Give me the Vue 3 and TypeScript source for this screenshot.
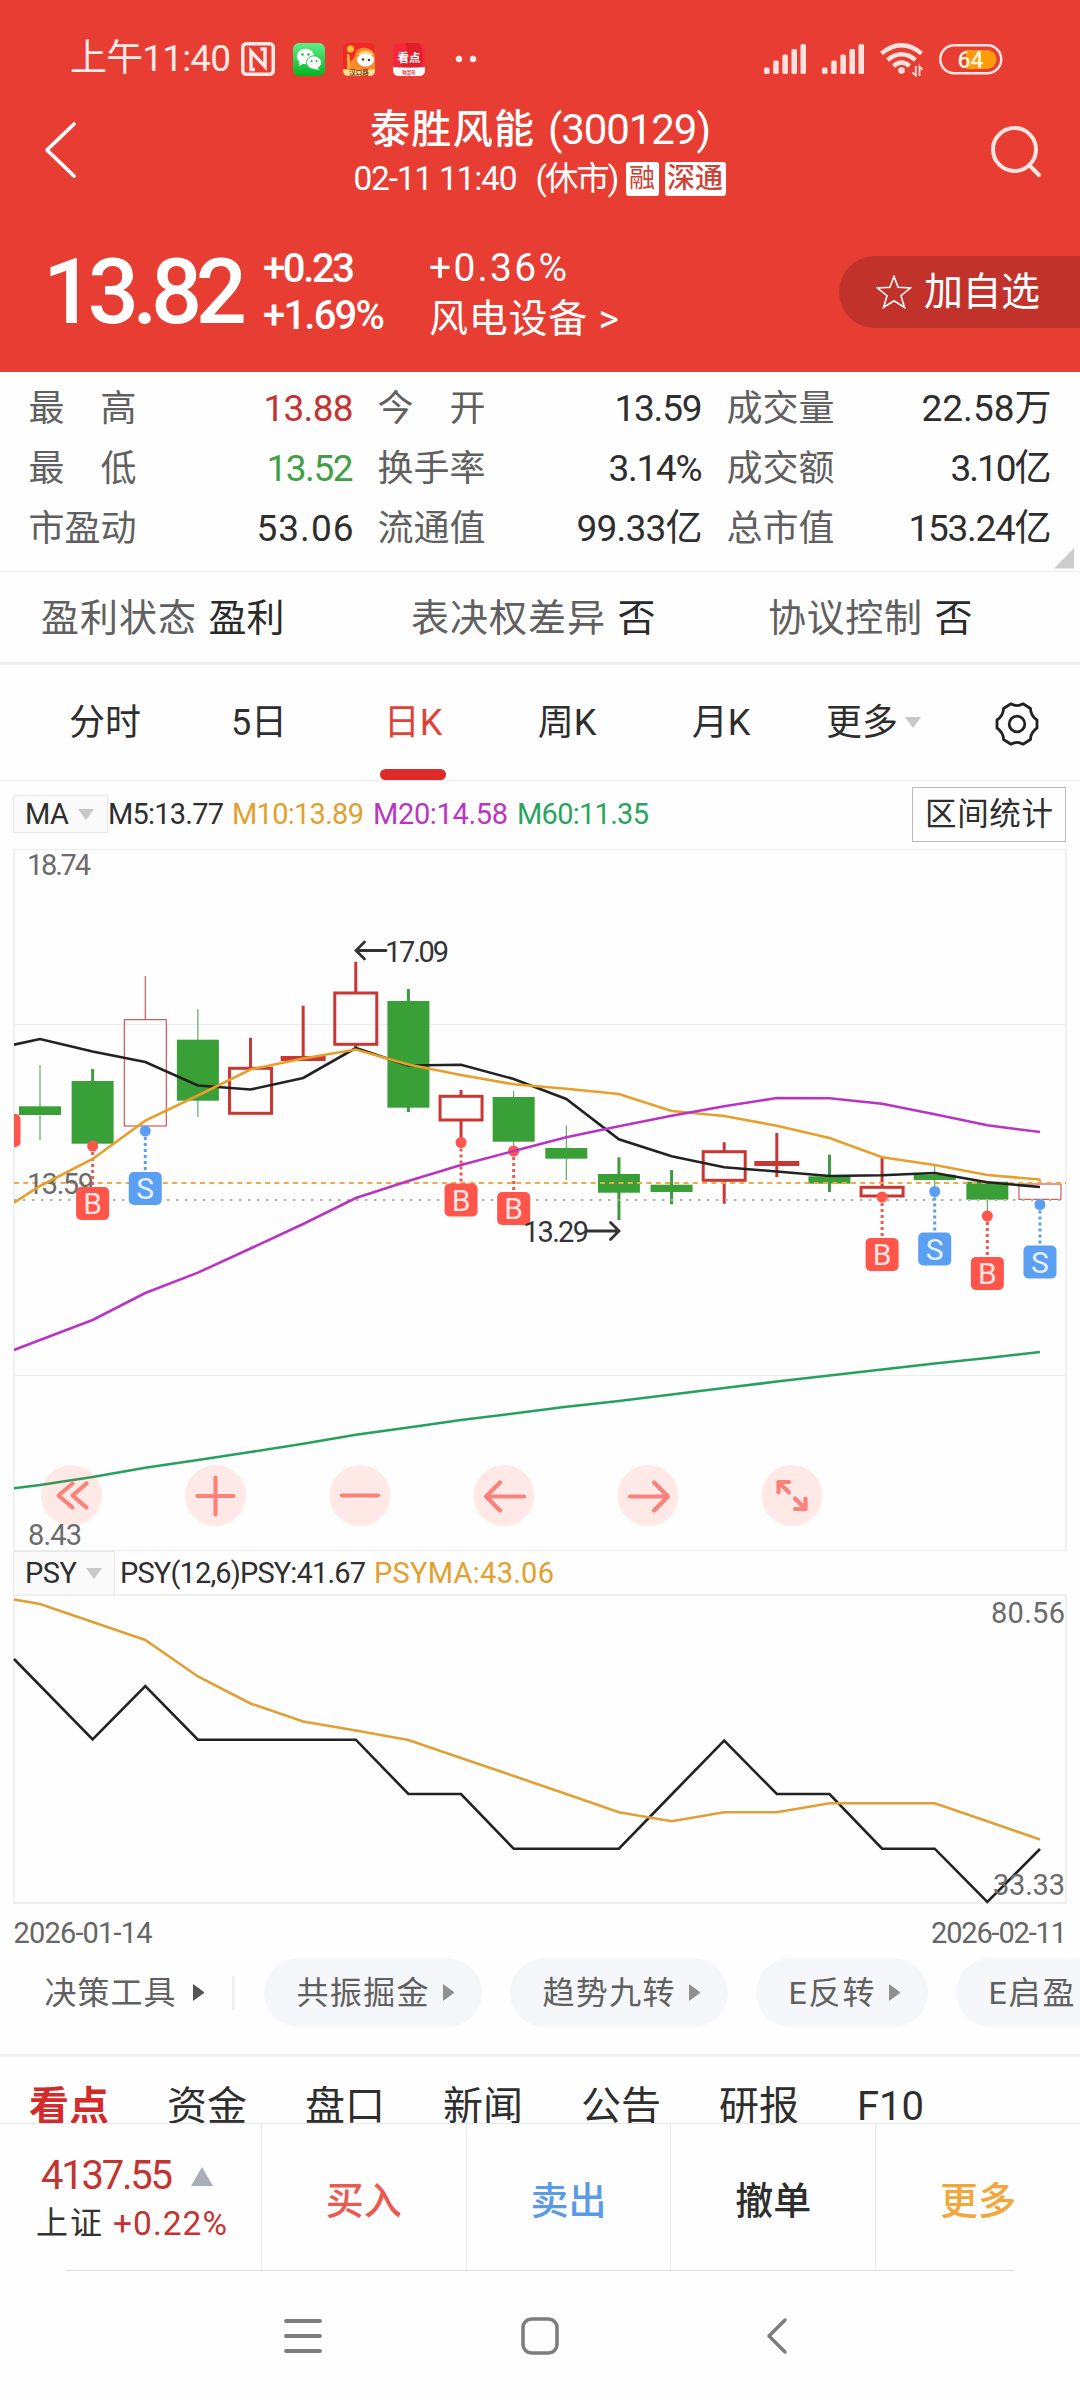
<script setup lang="ts">
import type { Directive } from 'vue'

// Spreads the letters of a label so that it takes exactly the given width.
const vFit: Directive<HTMLElement, number> = {
  mounted(el, { value }) {
    const natural = el.getBoundingClientRect().width
    const count = (el.textContent ?? '').length
    if (count > 1) el.style.letterSpacing = `${(value - natural) / (count - 1)}px`
    el.style.width = `${value}px`
  },
}

interface Stat { label: string; value: string; w: number; tone?: string }
const stats: Stat[] = [
  { label: '最　高', value: '13.88', w: 90, tone: 'up' },
  { label: '今　开', value: '13.59', w: 88 },
  { label: '成交量', value: '22.58万', w: 130 },
  { label: '最　低', value: '13.52', w: 87, tone: 'down' },
  { label: '换手率', value: '3.14%', w: 94 },
  { label: '成交额', value: '3.10亿', w: 101 },
  { label: '市盈动', value: '53.06', w: 97 },
  { label: '流通值', value: '99.33亿', w: 126 },
  { label: '总市值', value: '153.24亿', w: 143 },
]

// Candles: body top/bottom, wick top/bottom, stroke width; y is in chart space
interface Candle { up: boolean; a: number; b: number; h: number; l: number; s: number }
const k = (up: number, a: number, b: number, h: number, l: number, s = 3): Candle =>
  ({ up: !!up, a, b, h, l, s })
const candles: Candle[] = [
  k(0, 1106.3, 1115, 1065, 1140, 1),
  k(0, 1081, 1143.7, 1069, 1143),
  k(1, 1019.7, 1126, 976, 1126, 1),
  k(0, 1039.7, 1100.7, 1009.3, 1117, 1),
  k(1, 1068.3, 1113.3, 1037.7, 1113),
  k(1, 1057.5, 1059.5, 1005.7, 1059),
  k(1, 993, 1044.3, 961.7, 1047.7),
  k(0, 1001, 1107.7, 989, 1112),
  k(1, 1096.3, 1120, 1090, 1140),
  k(0, 1097, 1141.7, 1091, 1148, 1),
  k(0, 1148, 1158.7, 1125.3, 1180, 1),
  k(0, 1174, 1192.7, 1157.3, 1220),
  k(0, 1184.7, 1192, 1170, 1204.3),
  k(1, 1151.7, 1180.3, 1142.3, 1203.7),
  k(1, 1162.5, 1164.5, 1133, 1177),
  k(0, 1176.3, 1183.7, 1154.7, 1192),
  k(1, 1187.3, 1196, 1157, 1196),
  k(0, 1174.7, 1180, 1165, 1190, 1),
  k(0, 1181.7, 1199.7, 1181.7, 1213, 1),
  k(1, 1184, 1199.3, 1179, 1199, 1),
]
const cx = (i: number) => 40 + i * 52.63
const line = (first: number, ys: (number | null)[]) =>
  [`14,${first}`, ...ys.map((y, i) => (y === null ? '' : `${cx(i).toFixed(1)},${y}`))].filter(Boolean).join(' ')

const ma5 = line(1044.7, [1039, 1051.5, 1062, 1085.5, 1089.5, 1078, 1048, 1065.5, 1064.7, 1079, 1099, 1139.3, 1156.3, 1167.3, 1171.5, 1176, 1175.3, 1173, 1182.3, 1187])
const ma10 = line(1202.7, [1186, 1159, 1120.7, 1095.5, 1069.5, 1058.5, 1049.5, 1064.5, 1075, 1084.3, 1088.7, 1094, 1111, 1116, 1125.7, 1138, 1157.3, 1165, 1175, 1179.5])
const ma20 = line(1350, [1340, 1320, 1293, 1272.6, 1248.5, 1224, 1198, 1181, 1165, 1151, 1137.3, 1126.3, 1115.7, 1106.3, 1098, 1098.3, 1103.7, 1114.3, 1125.3, 1132])
const ma60 = line(1488.3, [1485, 1477, 1467.7, 1460, 1452, 1443.7, 1434.7, 1427.5, 1420, 1413.5, 1406.8, 1401, 1394.5, 1388, 1381.5, 1375.5, 1369.5, 1363.5, 1358, 1352])
const psyma = line(1599.5, [1604, 1622, 1640, 1676.5, 1703.5, 1721.5, 1730.5, 1740, 1758, 1776, 1794, 1812.3, 1821.3, 1812.3, 1812.3, 1803.3, 1803.3, 1803.3, 1821.3, 1839.5])
const psy = line(1659, [null, 1739.5, 1686, 1739.7, 1739.7, 1739.7, 1739.7, 1794, 1794, 1848.7, 1848.7, 1848.7, 1794.5, 1740.5, 1794, 1794, 1848.7, 1848.7, 1902, 1849])

const marks = [
  { i: 1, t: 'B', y: 1146 },
  { i: 2, t: 'S', y: 1131 },
  { i: 8, t: 'B', y: 1142.5 },
  { i: 9, t: 'B', y: 1151 },
  { i: 16, t: 'B', y: 1197 },
  { i: 17, t: 'S', y: 1191.5 },
  { i: 18, t: 'B', y: 1216 },
  { i: 19, t: 'S', y: 1204.5 },
]
const controls = [
  { x: 71.5, d: 'M1 -12L-13 0L1 12M15 -12L1 0L15 12' },
  { x: 215.5, d: 'M-18 0.5H18M0 -18V19' },
  { x: 360, d: 'M-18 0H18' },
  { x: 504, d: 'M20 1H-18M-4 -13L-18 1L-4 15' },
  { x: 648, d: 'M-18 1H20M6 -13L20 1L6 15' },
  { x: 792, d: 'M-3 -3L-13.500 -13.500M-13.500 -3V-13.500H-3M3 3L13.500 13.500M13.500 3V13.500H3' },
]

const chips = [
  { t: '共振掘金', w: 132 },
  { t: '趋势九转', w: 132 },
  { t: 'E反转', w: 86 },
  { t: 'E启盈', w: 86 },
]
const sections = ['看点', '资金', '盘口', '新闻', '公告', '研报', 'F10']
</script>

<template>
  <div class="screen">
    <header class="head">
      <div class="status">
        <span v-fit="161" class="clock">上午11:40</span>
        <svg class="nfc" width="34" height="34" viewBox="0 0 34 34" fill="none" stroke="#ffe9e6">
          <rect x="1.75" y="1.75" width="30.5" height="30.5" rx="3.5" stroke-width="3.5" />
          <path d="M14 27.500H10V9.500L24 24.500V7H19.500" stroke-width="3.500" />
        </svg>
        <svg class="app" width="32" height="33" viewBox="0 0 32 33">
          <defs><linearGradient id="wx" x2="0" y2="1"><stop stop-color="#5ff08a" /><stop offset="1" stop-color="#04b41e" /></linearGradient></defs>
          <rect width="32" height="33" rx="6" fill="url(#wx)" />
          <ellipse cx="12.500" cy="13.500" rx="8.700" ry="7.700" fill="#fff" /><path d="M6 19L6 23L11 20Z" fill="#fff" />
          <ellipse cx="21" cy="19.500" rx="7.600" ry="6.700" fill="#fff" stroke="#27c94c" stroke-width="1" /><path d="M24 24L26.500 27L21 26Z" fill="#fff" />
          <g fill="#18b53b"><circle cx="9.500" cy="11.500" r="1.200" /><circle cx="15.500" cy="11.500" r="1.200" /><circle cx="18.500" cy="18" r="1" /><circle cx="23.500" cy="18" r="1" /></g>
        </svg>
        <svg class="app" width="32" height="33" viewBox="0 0 32 33">
          <rect width="32" height="33" rx="6" fill="#f02a22" />
          <path d="M4 24C5 18 12 18 13 8C20 1 32 6 32 14V28H4Z" fill="#f98b2d" />
          <path d="M4 11Q6 10 7 15V25H4Z" fill="#ffb03b" /><circle cx="7.500" cy="6" r="3.600" fill="#ffbe3c" />
          <path d="M15 12C19 5 28 7 31 12Z" fill="#ffd27a" /><ellipse cx="22.500" cy="17" rx="8.500" ry="6.500" fill="#fff" />
          <circle cx="20" cy="16.500" r="1.300" fill="#543" /><circle cx="26" cy="17" r="1.300" fill="#543" />
          <path d="M0 26Q16 28.500 32 26V28Q32 33 26 33H6Q0 33 0 28Z" fill="#ffdf96" />
          <text x="16" y="32" font-size="6.500" text-anchor="middle" fill="#7a3b10" font-weight="700">汉口路</text>
        </svg>
        <svg class="app" width="32" height="33" viewBox="0 0 32 33">
          <rect width="32" height="33" rx="6" fill="#f5293a" /><path d="M12 0H26Q32 10 28 24H5Q18 14 12 0Z" fill="#e01f2b" />
          <path d="M0 24Q16 25.500 32 24V27Q32 33 26 33H6Q0 33 0 27Z" fill="#fff" />
          <text x="16" y="18.500" font-size="11.500" text-anchor="middle" fill="#fff" font-weight="700">看点</text>
          <text x="16" y="31" font-size="4.500" text-anchor="middle" fill="#e8343c" font-weight="700">财富号</text>
        </svg>
        <svg class="dots" width="22" height="8"><circle cx="4" cy="4" r="3.200" fill="#ffe9e6" /><circle cx="18" cy="4" r="3.200" fill="#ffe9e6" /></svg>
        <div class="grow"></div>
        <svg v-for="n in 2" :key="n" class="signal" width="42" height="30" fill="#ffe1dd">
          <rect x="0" y="23.500" width="5.500" height="6.500" rx="1.500" /><rect x="9.200" y="16.500" width="5.500" height="13.500" rx="1.500" />
          <rect x="18.400" y="10.500" width="5.500" height="19.500" rx="1.500" /><rect x="27.500" y="5" width="5.500" height="25" rx="1.500" />
          <rect x="36.500" y="0" width="5.500" height="30" rx="1.500" />
        </svg>
        <svg class="wifi" width="44" height="34" fill="none" stroke="#ffe1dd" stroke-width="4.500">
          <path d="M1.500 10.500Q21.500 -6 41.500 10.500M7.500 17Q21.500 5.500 35.500 17M13.500 23Q21.500 16 29.500 23" />
          <circle cx="21.500" cy="27.500" r="3.300" fill="#ffe1dd" stroke="none" />
          <path d="M35.800 23V32.500L32.500 29.500M39.500 33V23.500L42.500 27" stroke-width="1.800" />
        </svg>
        <svg class="battery" width="64" height="31" viewBox="0 0 64 31">
          <rect x="1.250" y="1.250" width="61" height="28" rx="14" fill="none" stroke="#ffe6e2" stroke-width="2.500" />
          <path d="M27 6H48A9.500 9.500 0 0 1 48 25H27Z" fill="#ff9a0c" />
          <text x="31.500" y="24" text-anchor="middle" font-size="23" font-weight="500" fill="#fff3d6">64</text>
        </svg>
      </div>

      <div class="titlebar">
        <svg width="36" height="60" fill="none" stroke="#fff" stroke-width="3.800" stroke-linecap="round" stroke-linejoin="round"><path d="M31 5L4 31L31 57" /></svg>
        <div class="names">
          <div class="name"><span v-fit="164" class="cn">泰胜风能</span><span v-fit="163" class="code">(300129)</span></div>
          <div class="sub">
            <span v-fit="164">02-11 11:40</span><span v-fit="84" class="rest">(休市)</span>
            <span class="badge b1">融</span><span class="badge b2">深通</span>
          </div>
        </div>
        <svg width="54" height="54" fill="none" stroke="#ffe5e1" stroke-width="4" stroke-linecap="round"><circle cx="25.500" cy="24.500" r="21.500" /><path d="M40 40L50 50" /></svg>
      </div>

      <div class="quote">
        <span v-fit="204" class="price">13.82</span>
        <div class="delta"><span v-fit="92">+0.23</span><span v-fit="122">+1.69%</span></div>
        <div class="sector"><span v-fit="138">+0.36%</span><span v-fit="190">风电设备 &gt;</span></div>
        <div class="grow"></div>
        <div class="add">
          <svg width="36" height="34" viewBox="0 0 36 34" fill="none" stroke="#fff" stroke-width="1.600"><path d="M18 1.500L22.100 12.300L34.500 13L25 20.700L28.500 32.500L18 25.800L7.500 32.500L11 20.700L1.500 13L13.900 12.300Z" /></svg>
          <span v-fit="116">加自选</span>
        </div>
      </div>
    </header>

    <section class="stats">
      <div v-for="s in stats" :key="s.label" class="stat">
        <span>{{ s.label }}</span><span v-fit="s.w" class="val" :class="s.tone">{{ s.value }}</span>
      </div>
      <svg class="corner" width="21" height="22"><path d="M21 1V20Q21 21.500 19.500 21.500H1Z" fill="#ccc" /></svg>
    </section>

    <section class="flags">
      <div class="flag f1"><span v-fit="155">盈利状态</span><b v-fit="76">盈利</b></div>
      <div class="flag f2"><span v-fit="194">表决权差异</span><b>否</b></div>
      <div class="flag f3"><span v-fit="154">协议控制</span><b>否</b></div>
    </section>

    <nav class="periods">
      <span>分时</span><span>5日</span><span class="on">日K</span><span>周K</span><span>月K</span>
      <span class="more">更多<i class="tri"></i></span>
      <svg class="gear" width="44" height="44" fill="none" stroke="#222" stroke-width="2.800" stroke-linejoin="round"><path d="M16 1.800Q22 5.600 28 1.800L35.500 6.500Q35.500 13.500 42 18V26Q35.500 30.500 35.500 37.500L28 42.200Q22 38.400 16 42.200L8.500 37.500Q8.500 30.500 2 26V18Q8.500 13.500 8.500 6.500Z" /><circle cx="22" cy="22" r="7.800" /></svg>
    </nav>

    <div class="legend">
      <span class="pick"><span v-fit="44">MA</span><i class="tri"></i></span>
      <span v-fit="116">M5:13.77</span>
      <span v-fit="132" class="orange">M10:13.89</span>
      <span v-fit="135" class="purple">M20:14.58</span>
      <span v-fit="132" class="green">M60:11.35</span>
      <div class="grow"></div>
      <span class="range"><span v-fit="128">区间统计</span></span>
    </div>

    <svg class="chart" width="1080" height="702" viewBox="0 849 1080 702">
      <defs><clipPath id="plot"><rect x="14" y="849" width="1052" height="702" /></clipPath></defs>
      <path d="M14 849.500H1066M14 1024.500H1066M14 1375.500H1066M14 1550.500H1066" class="grid" />
      <path d="M14 849V1551M1066 849V1551" class="grid side" />
      <g clip-path="url(#plot)">
        <g v-for="(c, i) in candles" :key="i" :class="c.up ? 'rise' : 'fall'" :stroke-width="c.s">
          <template v-if="c.up">
            <path :d="`M${cx(i)} ${c.h}V${c.a}M${cx(i)} ${c.b}V${c.l}`" />
            <rect :x="cx(i) - 21" :y="c.a" width="42" :height="c.b - c.a" />
          </template>
          <template v-else>
            <path :d="`M${cx(i)} ${c.h}V${c.l}`" />
            <rect :x="cx(i) - 21" :y="c.a" width="42" :height="c.b - c.a" stroke="none" />
          </template>
        </g>
        <path d="M14 1183H1066" stroke="#f0a848" stroke-width="2" stroke-dasharray="5 4.300" fill="none" />
        <path d="M14 1200H1066" stroke="#b0b0b0" stroke-width="2" stroke-dasharray="2.500 6.500" fill="none" />
        <text x="27" y="1194" textLength="67" class="axis">13.59</text>
        <g v-for="m in marks" :key="m.i" :class="m.t === 'B' ? 'buy' : 'sell'">
          <path :d="`M${cx(m.i)} ${m.y}V${m.y + 41}`" stroke-width="3" stroke-dasharray="3 3" />
          <circle :cx="cx(m.i)" :cy="m.y" r="5.500" />
          <rect :x="cx(m.i) - 16.500" :y="m.y + 41" width="33" height="33" rx="5" />
          <text :x="cx(m.i)" :y="m.y + 68.200" text-anchor="middle" class="tag">{{ m.t }}</text>
        </g>
        <rect x="-12" y="1114" width="32.500" height="33" rx="5" fill="#ff554b" />
        <g class="lines">
          <polyline :points="ma5" stroke="#222" /><polyline :points="ma10" stroke="#e79f2b" />
          <polyline :points="ma20" stroke="#b934c2" /><polyline :points="ma60" stroke="#25a15d" />
        </g>
      </g>
      <text x="27" y="875" textLength="64" class="axis">18.74</text>
      <text x="28" y="1545" textLength="54" class="axis">8.43</text>
      <path d="M386 950.500H357M364.500 942L356 950.500L364.500 959" class="arrow" />
      <text x="385" y="961.500" textLength="64" class="peak">17.09</text>
      <path d="M588 1231H618M610.500 1222.500L619 1231L610.500 1239.500" class="arrow" />
      <text x="523" y="1242" textLength="66" class="peak">13.29</text>
      <g v-for="c in controls" :key="c.x" :transform="`translate(${c.x} 1495.500)`">
        <circle r="30.500" fill="#ff3c32" fill-opacity="0.110" />
        <path :d="c.d" fill="none" stroke="#fa827a" stroke-width="4.200" stroke-linecap="round" stroke-linejoin="round" />
      </g>
    </svg>

    <div class="legend low">
      <span class="pick"><span v-fit="52">PSY</span><i class="tri"></i></span>
      <span v-fit="246" class="psy">PSY(12,6)PSY:41.67</span>
      <span v-fit="180" class="orange">PSYMA:43.06</span>
    </div>
    <svg class="chart" width="1080" height="311" viewBox="0 1594 1080 311">
      <path d="M14 1595H1066V1903H14Z" class="grid side" />
      <g class="lines"><polyline :points="psy" stroke="#222" /><polyline :points="psyma" stroke="#e0a035" /></g>
      <text x="991" y="1623" textLength="74" class="axis">80.56</text>
      <text x="993" y="1895" textLength="72" class="axis">33.33</text>
    </svg>
    <div class="dates"><span v-fit="139">2026-01-14</span><span v-fit="136">2026-02-11</span></div>

    <div class="tools">
      <span v-fit="131" class="lead">决策工具</span><i class="play dark"></i><i class="bar"></i>
      <span v-for="c in chips" :key="c.t" class="chip"><span v-fit="c.w">{{ c.t }}</span><i class="play"></i></span>
    </div>

    <nav class="sections"><span v-for="(s, i) in sections" :key="s" :class="{ on: i === 0 }">{{ s }}</span></nav>

    <footer class="actions">
      <div class="index">
        <div class="points"><span v-fit="132">4137.55</span><svg width="22" height="19"><path d="M11 0L22 19H0Z" fill="#a9aeb8" /></svg></div>
        <div class="chg"><span v-fit="66" class="sh">上证</span><span v-fit="114">+0.22%</span></div>
      </div>
      <div class="act buyact">买入</div><div class="act sellact">卖出</div><div class="act">撤单</div><div class="act moreact">更多</div>
    </footer>
    <div class="navbar">
      <svg width="38" height="36" stroke="#7c7c7c" stroke-width="3.800" stroke-linecap="round"><path d="M2 3H36M2 18H36M2 33H36" /></svg>
      <svg width="38" height="38" fill="none" stroke="#7c7c7c" stroke-width="3.500"><rect x="2" y="2" width="34" height="34" rx="8.500" /></svg>
      <svg width="22" height="38" fill="none" stroke="#7c7c7c" stroke-width="3.500" stroke-linecap="round" stroke-linejoin="round"><path d="M19 3L3 19L19 35" /></svg>
    </div>
  </div>
</template>

<style>
body { background: #fff; }
</style>
<style scoped>
.screen { width: 1080px; height: 2400px; overflow: hidden; background: #fefefe; color: #2e2e2e; font-family: Roboto, "Noto Sans CJK SC", sans-serif; font-size: 36px; }
.screen * { box-sizing: border-box; }
span, b { white-space: pre; flex: none; display: inline-block; font-weight: inherit; }
svg { flex: none; display: block; }
.grow { flex: 1; }
.head { height: 372px; background: #e73d33; color: #fff; }
.status { display: flex; height: 118px; padding: 0 77px 0 70px; align-items: center; }
.clock { font-size: 37px; line-height: 120px; color: #ffe9e6; }
.nfc { margin-left: 10px; }
.app { margin-left: 18px; }
.dots { margin-left: 30px; }
.signal { margin-right: 16px; }
.wifi { margin-top: 2px; }
.battery { margin-left: 15px; }
.titlebar { display: flex; height: 118px; padding: 0 37px 0 43px; }
.titlebar > svg:first-child { margin-top: 1px; }
.titlebar > svg:last-child { margin-top: 7px; }
.names { flex: 1; display: flex; flex-direction: column; align-items: center; margin-left: 11px; }
.name { display: flex; height: 49px; line-height: 23px; margin-left: 2px; }
.cn { font-size: 40px; font-weight: 500; }
.code { font-size: 42px; margin-left: 14px; }
.sub { display: flex; height: 50px; align-items: center; font-size: 33.500px; margin-top: -13px; line-height: 50px; }
.rest { margin-left: 18px; }
.badge { height: 34px; line-height: 33px; background: #fff; color: #cf4238; border-radius: 3px; text-align: center; font-size: 28px; margin-left: 6px; }
.b1 { width: 33px; font-size: 26px; }
.b2 { width: 61px; font-weight: 500; }
.quote { display: flex; height: 136px; padding-left: 43px; align-items: flex-start; }
.price { font-size: 90px; font-weight: 500; line-height: 114px; }
.delta, .sector { display: flex; flex-direction: column; align-items: flex-start; }
.delta { width: 182px; padding: 9px 0 0 16px; font-size: 40px; line-height: 47px; font-weight: 500; }
.sector { font-size: 39px; padding-top: 7px; line-height: 51px; }
.add { display: flex; width: 241px; height: 72px; margin-top: 20px; padding-left: 37px; border-radius: 36px 0 0 36px; background: #c1322b; align-items: center; font-size: 39px; line-height: 73px; }
.add span { margin-left: 12px; }
.stats { position: relative; height: 199px; display: grid; grid-template-columns: repeat(3, 325px); column-gap: 24px; grid-auto-rows: 60px; padding: 7px 0 0 28.500px; }
.stat { display: flex; justify-content: space-between; line-height: 60px; color: #606060; }
.val { color: #2e2e2e; font-size: 37px; }
.up { color: #c33431; }
.down { color: #3f9f43; }
.corner { position: absolute; left: 1053px; top: 175px; }
.flags { position: relative; display: flex; height: 94px; border-top: 1px solid #eee; border-bottom: 3px solid #efefef; font-size: 38px; line-height: 92px; color: #606060; }
.flag b { color: #2a2a2a; margin-left: 12.500px; }
.f1 { width: 411px; padding-left: 41px; }
.f2 { width: 357px; }
.periods { display: flex; height: 116px; border-bottom: 1px solid #e9e9e9; line-height: 116px; }
.periods > span { width: 154px; text-align: center; }
.periods > span:first-child { margin-left: 28px; }
.periods .on { position: relative; color: #df4238; }
.periods .on::after { content: ""; position: absolute; left: 44px; bottom: 0; width: 66px; height: 11px; border-radius: 6px; background: #e02a2a; }
.tri { display: inline-block; border: 8px solid transparent; border-top: 11px solid #c8c8c8; border-bottom: 0; }
.periods .more { width: 100px; margin-left: 28px; display: flex; align-items: center; }
.more .tri { margin-left: 7px; }
.gear { margin: 37px 0 0 69px; }
.legend { display: flex; height: 68px; align-items: center; padding: 0 14px 2px 13px; font-size: 29px; line-height: 40px; }
.pick { display: flex; width: 95px; height: 38px; align-items: center; background: #fafafa; border: 1px solid #e8e8e8; padding-left: 11px; }
.pick .tri { margin-left: 9px; }
.orange { color: #e3a02f; margin-left: 8px; }
.purple { color: #ba36c2; margin-left: 9px; }
.green { color: #2aa561; margin-left: 9px; }
.range { width: 154px; height: 55px; border: 1.500px solid #bcbcbc; padding-left: 12px; font-size: 31.500px; line-height: 53px; }
.chart { overflow: hidden; }
.grid { fill: none; stroke: #ececec; stroke-width: 1; }
.side { stroke: #efefef; stroke-width: 2; }
.rise { stroke: #c83733; fill: none; }
.fall { stroke: #3f9a42; fill: #39a038; }
.lines polyline { fill: none; stroke-width: 2.600; }
.axis { font-size: 29px; fill: #6b6b6b; }
.peak { font-size: 29px; fill: #333; }
.arrow { fill: none; stroke: #333; stroke-width: 2.800; stroke-linecap: round; }
.buy { fill: #ff554b; stroke: none; }
.buy path { stroke: #ea5a50; }
.sell { fill: #5b9ff2; }
.sell path { stroke: #5b9ff2; }
.tag { font-size: 30px; fill: #fff; fill-opacity: 0.870; }
.low { height: 43px; padding-bottom: 0; }
.low .pick { width: 102px; height: 43px; border-bottom: 0; }
.psy { margin-left: 5px; }
.dates { display: flex; justify-content: space-between; height: 53px; padding: 0 13px 0 13.500px; line-height: 56px; font-size: 29px; color: #666; }
.tools { display: flex; height: 99px; border-bottom: 3px solid #f0f0f0; align-items: flex-start; overflow: hidden; font-size: 32px; line-height: 71px; color: #606060; }
.lead { margin-left: 44.500px; }
.play { flex: none; align-self: flex-start; width: 11px; height: 17px; border: 8.500px solid transparent; border-left: 11px solid #909090; border-right: 0; margin: 26px 0 0 14px; }
.dark { border-left-color: #555; margin-left: 17.500px; }
.bar { flex: none; width: 3px; height: 34px; margin: 18px 28.500px 0 28px; background: #f0f0f2; }
.chip { display: flex; height: 69px; border-radius: 35px; background: #f5f7fb; padding: 0 28px 0 33px; margin-right: 28px; }
.sections { display: flex; height: 67px; overflow: hidden; font-size: 40px; line-height: 99px; border-bottom: 1px solid #e8e8e8; padding-left: 29px; }
.sections span { width: 138px; }
.sections .on { color: #d32b2b; font-weight: 700; }
.actions { display: flex; height: 147px; position: relative; }
.actions::after { content: ""; position: absolute; left: 66px; right: 66px; bottom: 0; height: 1px; background: #dedede; }
.index { width: 261px; color: #c33431; padding: 24px 0 0 36px; }
.points { display: flex; font-size: 40px; line-height: 56px; align-items: center; padding-left: 5px; }
.points svg { margin-left: 18px; }
.chg { display: flex; font-size: 33.500px; line-height: 39px; }
.sh { color: #333; margin-right: 11px; font-size: 32px; }
.act { width: 204.700px; border-left: 1px solid #e8e8e8; text-align: center; font-size: 38px; font-weight: 500; line-height: 154px; }
.buyact { color: #ea5a50; }
.sellact { color: #5b9ae5; }
.moreact { color: #f2a63c; }
.navbar { display: flex; height: 129px; align-items: center; padding-left: 284px; }
.navbar svg + svg { margin-left: 199px; }
.navbar svg + svg + svg { margin-left: 207px; }
</style>
